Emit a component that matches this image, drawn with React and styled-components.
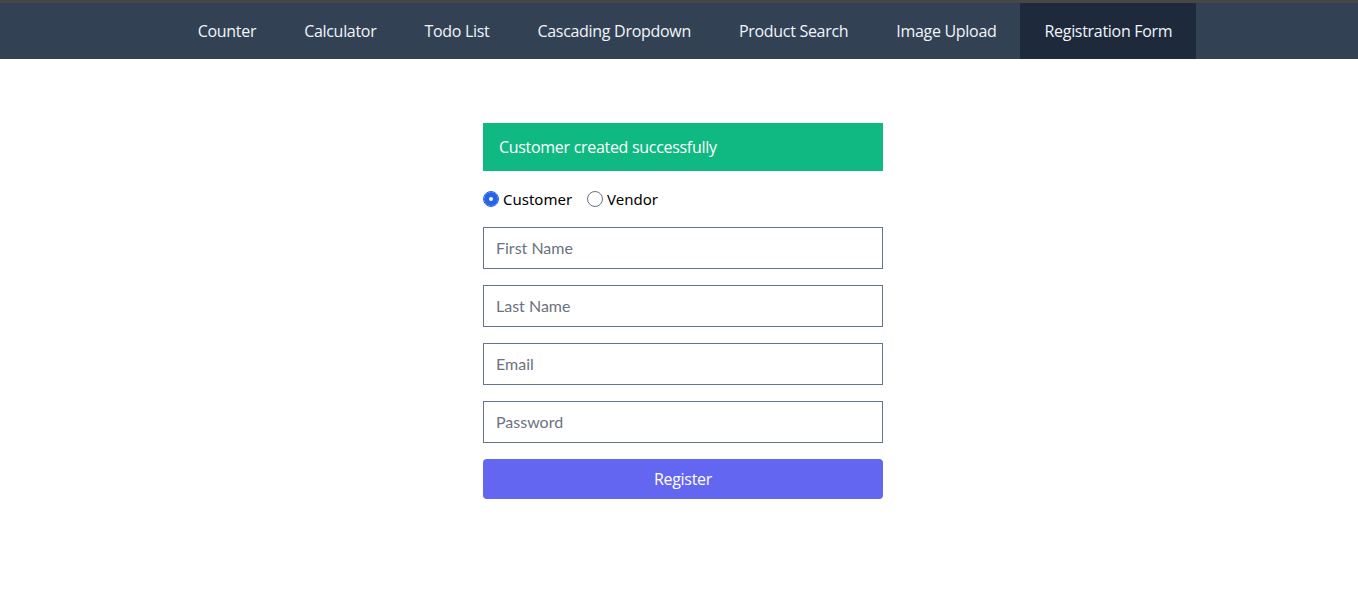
import React, { useState } from "react";
import styled, { createGlobalStyle } from "styled-components";

const GlobalStyle = createGlobalStyle`
  * { box-sizing: border-box; }
  body {
    margin: 0;
    background: #ffffff;
    font-family: "Open Sans", "Noto Sans", sans-serif;
  }
`;

const tabs = [
  "Counter",
  "Calculator",
  "Todo List",
  "Cascading Dropdown",
  "Product Search",
  "Image Upload",
  "Registration Form",
];

const App = () => {
  const [role, setRole] = useState("customer");

  return (
    <>
      <GlobalStyle />
      <NavBar>
        {tabs.map((t) => (
          <NavItem key={t} $active={t === "Registration Form"}>
            {t}
          </NavItem>
        ))}
      </NavBar>
      <Main>
        <Form onSubmit={(e) => e.preventDefault()}>
          <Alert>Customer created successfully</Alert>
          <RadioRow>
            <RadioLabel>
              <Radio
                type="radio"
                name="role"
                checked={role === "customer"}
                onChange={() => setRole("customer")}
              />
              Customer
            </RadioLabel>
            <RadioLabel>
              <Radio
                type="radio"
                name="role"
                checked={role === "vendor"}
                onChange={() => setRole("vendor")}
              />
              Vendor
            </RadioLabel>
          </RadioRow>
          <Input type="text" placeholder="First Name" />
          <Input type="text" placeholder="Last Name" />
          <Input type="email" placeholder="Email" />
          <Input type="password" placeholder="Password" />
          <Button type="submit">Register</Button>
        </Form>
      </Main>
    </>
  );
};

const NavBar = styled.nav`
  display: flex;
  justify-content: center;
  padding-left: 12px;
  background-color: #334155;
  border-top: 3px solid #474747;
`;

const NavItem = styled.a`
  padding: 16px 24px;
  line-height: 24px;
  font-size: 16px;
  letter-spacing: -0.3px;
  color: #f1f5f9;
  background-color: ${(p) => (p.$active ? "#1e293b" : "transparent")};
  cursor: pointer;
`;

const Main = styled.main`
  display: flex;
  justify-content: center;
  padding: 64px 0 0 8px;
`;

const Form = styled.form`
  width: 400px;
  display: flex;
  flex-direction: column;
  gap: 16px;
`;

const Alert = styled.div`
  background-color: #10b981;
  color: #ffffff;
  padding: 12px 16px;
  line-height: 24px;
  font-size: 16px;
  letter-spacing: -0.3px;
`;

const RadioRow = styled.div`
  display: flex;
  gap: 15px;
  height: 24px;
  align-items: center;
`;

const RadioLabel = styled.label`
  display: flex;
  align-items: center;
  gap: 4px;
  font-family: "Noto Sans", sans-serif;
  font-size: 15px;
  color: #000000;
`;

const Radio = styled.input`
  appearance: none;
  width: 16px;
  height: 16px;
  margin: 0;
  border-radius: 50%;
  border: 1px solid #6b7280;
  background-color: #ffffff;

  &:checked {
    border-color: #2563eb;
    box-shadow: inset 0 0 0 5px #2563eb;
  }
`;

const Input = styled.input`
  width: 100%;
  height: 42px;
  padding: 7px 12px 9px;
  border: 1px solid #64748b;
  font-family: Lato, sans-serif;
  font-size: 16px;
  color: #111827;
  outline: none;

  &::placeholder {
    color: #6b7280;
  }
`;

const Button = styled.button`
  height: 40px;
  border: none;
  border-radius: 4px;
  background-color: #6366f1;
  color: #ffffff;
  font-family: "Open Sans", "Noto Sans", sans-serif;
  font-size: 16px;
  letter-spacing: -0.3px;
  cursor: pointer;
`;

export default App;
